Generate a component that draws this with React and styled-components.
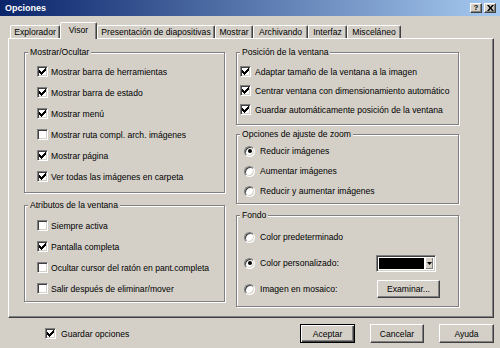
import React from 'react';
import styled, { createGlobalStyle } from 'styled-components';

const Global = createGlobalStyle`
  html, body { margin: 0; padding: 0; background: #D4D0C8; }
  body { font-family: "Liberation Sans", Arial, sans-serif; font-size: 8.6px; color: #000; }
  * { box-sizing: border-box; }
`;

const Window = styled.div`
  width: 500px;
  height: 348px;
  overflow: hidden;
  background: #D4D0C8;
  display: flex;
  flex-direction: column;
`;

const TitleBar = styled.div`
  height: 16px;
  flex: none;
  display: flex;
  align-items: center;
  padding: 0 4px 0 4px;
  background: linear-gradient(to right, #0A246A 0%, #A6CAF0 100%);
`;

const Title = styled.span`
  color: #fff;
  font-weight: bold;
  font-size: 9px;
  padding-left: 1px;
`;

const TitleButtons = styled.div`
  margin-left: auto;
  display: flex;
  gap: 2px;
`;

const TitleButton = styled.span`
  width: 12px;
  height: 10px;
  display: flex;
  align-items: center;
  justify-content: center;
  background: #D4D0C8;
  border: 1px solid;
  border-color: #fff #404040 #404040 #fff;
  box-shadow: inset -1px -1px 0 #808080;
  font-weight: bold;
  font-size: 8px;
  line-height: 8px;
`;

const Body = styled.div`
  flex: 1;
  display: flex;
  flex-direction: column;
  padding: 0 6px 0 8px;
  border-left: 1px solid #fff;
  margin-left: -1px;
`;

const TabStrip = styled.div`
  display: flex;
  align-items: flex-end;
  margin-top: 6px;
  height: 16px;
  padding-left: 2px;
  position: relative;
  z-index: 1;
`;

const Tab = styled.div`
  width: ${p => p.$w}px;
  height: ${p => (p.$active ? 17 : 13)}px;
  margin-bottom: ${p => (p.$active ? -1 : 0)}px;
  display: flex;
  align-items: center;
  justify-content: center;
  padding-bottom: ${p => (p.$active ? 2 : 0)}px;
  background: #D4D0C8;
  border-top: 1px solid #fff;
  border-left: 1px solid #fff;
  border-right: 1px solid #404040;
  border-radius: 2px 2px 0 0;
  box-shadow: inset -1px 0 0 #808080;
  white-space: nowrap;
`;

const Panel = styled.div`
  height: 280px;
  flex: none;
  display: flex;
  align-items: flex-start;
  gap: 11px;
  padding: 8px 0 0 15px;
  border: 1px solid;
  border-color: #fff #404040 #404040 #fff;
  box-shadow: inset -1px -1px 0 #808080;
`;

const Column = styled.div`
  width: ${p => p.$w}px;
  display: flex;
  flex-direction: column;
`;

const Group = styled.fieldset`
  margin: ${p => p.$mt || 0}px 0 0;
  padding: 0;
  min-width: 0;
  border: 1px solid #808080;
  box-shadow: inset 1px 1px 0 #fff, 1px 1px 0 #fff;
`;

const Legend = styled.legend`
  margin-left: 3px;
  padding: 0 2px;
  line-height: 10px;
  background: #D4D0C8;
`;

const Rows = styled.div`
  display: flex;
  flex-direction: column;
  padding: ${p => p.$pt}px 0 ${p => p.$pb}px ${p => p.$pl}px;
`;

const Row = styled.div`
  height: ${p => p.$h}px;
  display: flex;
  align-items: center;
`;

const Choice = styled.label`
  display: flex;
  align-items: center;
  gap: ${p => p.$gap}px;
  flex: ${p => (p.$w ? `0 0 ${p.$w}px` : '0 0 auto')};
  white-space: nowrap;
`;

const Box = styled.span`
  width: 11px;
  height: 11px;
  flex: none;
  display: flex;
  align-items: center;
  justify-content: center;
  background: #fff;
  border: 1px solid;
  border-color: #808080 #fff #fff #808080;
  box-shadow: inset 1px 1px 0 #404040, inset -1px -1px 0 #D4D0C8;
`;

const Radio = styled.span`
  width: 11px;
  height: 11px;
  flex: none;
  border-radius: 50%;
  display: flex;
  align-items: center;
  justify-content: center;
  background: #fff;
  border: 1px solid;
  border-color: #808080 #fff #fff #808080;
  box-shadow: inset 1px 1px 0 #404040, inset -1px -1px 0 #D4D0C8;
`;

const Dot = styled.span`
  width: 4px;
  height: 4px;
  border-radius: 50%;
  background: #000;
`;

const ColorPicker = styled.div`
  width: 60px;
  height: 17px;
  display: flex;
  padding: 2px;
  gap: 1px;
  background: #fff;
  border: 1px solid;
  border-color: #808080 #fff #fff #808080;
  box-shadow: inset 1px 1px 0 #404040, inset -1px -1px 0 #D4D0C8;
`;

const Swatch = styled.span`
  flex: 1;
  background: #000;
`;

const DropButton = styled.span`
  width: 8px;
  display: flex;
  align-items: center;
  justify-content: center;
  background: #D4D0C8;
  border-left: 1px solid #fff;
  box-shadow: inset -1px -1px 0 #808080;
`;

const Button = styled.button`
  width: ${p => p.$w}px;
  height: ${p => p.$h}px;
  padding: 0;
  font: inherit;
  color: #000;
  background: #D4D0C8;
  border: 1px solid;
  border-color: ${p => (p.$default ? '#000' : '#fff #404040 #404040 #fff')};
  box-shadow: ${p =>
    p.$default
      ? 'inset 1px 1px 0 #fff, inset -1px -1px 0 #404040, inset -2px -2px 0 #808080'
      : 'inset -1px -1px 0 #808080'};
`;

const BottomBar = styled.div`
  display: flex;
  align-items: center;
  height: 19px;
  margin-top: 6px;
  padding-left: 37px;
`;

const Buttons = styled.div`
  margin-left: auto;
  display: flex;
  gap: 15px;
`;

const CheckMark = () => (
  <svg width="7" height="7" viewBox="0 0 7 7">
    <path d="M0 2h1v1h1v1h1V3h1V2h1V1h1V0h1v3H6v1H5v1H4v1H3v1H2V6H1V5H0z" fill="#000" />
  </svg>
);

const Check = ({ checked, label, gap = 3, w }) => (
  <Choice $gap={gap} $w={w}>
    <Box>{checked && <CheckMark />}</Box>
    <span>{label}</span>
  </Choice>
);

const Option = ({ checked, label, w }) => (
  <Choice $gap={5} $w={w}>
    <Radio>{checked && <Dot />}</Radio>
    <span>{label}</span>
  </Choice>
);

const tabs = [
  ['Explorador', 50],
  ['Visor', 37, true],
  ['Presentación de diapositivas', 118],
  ['Mostrar', 38],
  ['Archivando', 55],
  ['Interfaz', 39],
  ['Misceláneo', 54],
];

const showHide = [
  ['Mostrar barra de herramientas', true],
  ['Mostrar barra de estado', true],
  ['Mostrar menú', true],
  ['Mostrar ruta compl. arch. imágenes', false],
  ['Mostrar página', true],
  ['Ver todas las imágenes en carpeta', true],
];

const attrs = [
  ['Siempre activa', false],
  ['Pantalla completa', true],
  ['Ocultar cursor del ratón en pant.completa', false],
  ['Salir después de eliminar/mover', false],
];

const position = [
  'Adaptar tamaño de la ventana a la imagen',
  'Centrar ventana con dimensionamiento automático',
  'Guardar automáticamente posición de la ventana',
];

const zoom = [
  ['Reducir imágenes', true],
  ['Aumentar imágenes', false],
  ['Reducir y aumentar imágenes', false],
];

export default function App() {
  return (
    <>
      <Global />
      <Window>
        <TitleBar>
          <Title>Opciones</Title>
          <TitleButtons>
            <TitleButton>?</TitleButton>
            <TitleButton>
              <svg width="7" height="6" viewBox="0 0 7 6">
                <path d="M0 0h2l1.5 2L5 0h2L4.5 3 7 6H5L3.5 4 2 6H0l2.5-3z" fill="#000" />
              </svg>
            </TitleButton>
          </TitleButtons>
        </TitleBar>
        <Body>
          <TabStrip>
            {tabs.map(([t, w, a]) => (
              <Tab key={t} $w={w} $active={a}>
                {t}
              </Tab>
            ))}
          </TabStrip>
          <Panel>
            <Column $w={201}>
              <Group>
                <Legend>Mostrar/Ocultar</Legend>
                <Rows $pt={4} $pb={5} $pl={12}>
                  {showHide.map(([l, c]) => (
                    <Row key={l} $h={21}>
                      <Check checked={c} label={l} />
                    </Row>
                  ))}
                </Rows>
              </Group>
              <Group $mt={7}>
                <Legend>Atributos de la ventana</Legend>
                <Rows $pt={5} $pb={2} $pl={12}>
                  {attrs.map(([l, c]) => (
                    <Row key={l} $h={21}>
                      <Check checked={c} label={l} />
                    </Row>
                  ))}
                </Rows>
              </Group>
            </Column>
            <Column $w={223}>
              <Group>
                <Legend>Posición de la ventana</Legend>
                <Rows $pt={5} $pb={5} $pl={3}>
                  {position.map(l => (
                    <Row key={l} $h={19}>
                      <Check checked label={l} gap={4} />
                    </Row>
                  ))}
                </Rows>
              </Group>
              <Group $mt={4}>
                <Legend>Opciones de ajuste de zoom</Legend>
                <Rows $pt={2} $pb={2} $pl={7}>
                  {zoom.map(([l, c]) => (
                    <Row key={l} $h={20}>
                      <Option checked={c} label={l} />
                    </Row>
                  ))}
                </Rows>
              </Group>
              <Group $mt={6}>
                <Legend>Fondo</Legend>
                <Rows $pt={4} $pb={4} $pl={7}>
                  <Row $h={26}>
                    <Option label="Color predeterminado" />
                  </Row>
                  <Row $h={26}>
                    <Option checked label="Color personalizado:" w={132} />
                    <ColorPicker>
                      <Swatch />
                      <DropButton>
                        <svg width="5" height="3" viewBox="0 0 5 3">
                          <path d="M0 0h5L2.5 3z" fill="#000" />
                        </svg>
                      </DropButton>
                    </ColorPicker>
                  </Row>
                  <Row $h={26}>
                    <Option label="Imagen en mosaico:" w={133} />
                    <Button $w={63} $h={18}>Examinar...</Button>
                  </Row>
                </Rows>
              </Group>
            </Column>
          </Panel>
          <BottomBar>
            <Check checked label="Guardar opciones" gap={5} />
            <Buttons>
              <Button $default $w={55} $h={19}>Aceptar</Button>
              <Button $w={54} $h={19}>Cancelar</Button>
              <Button $w={55} $h={19}>Ayuda</Button>
            </Buttons>
          </BottomBar>
        </Body>
      </Window>
    </>
  );
}
